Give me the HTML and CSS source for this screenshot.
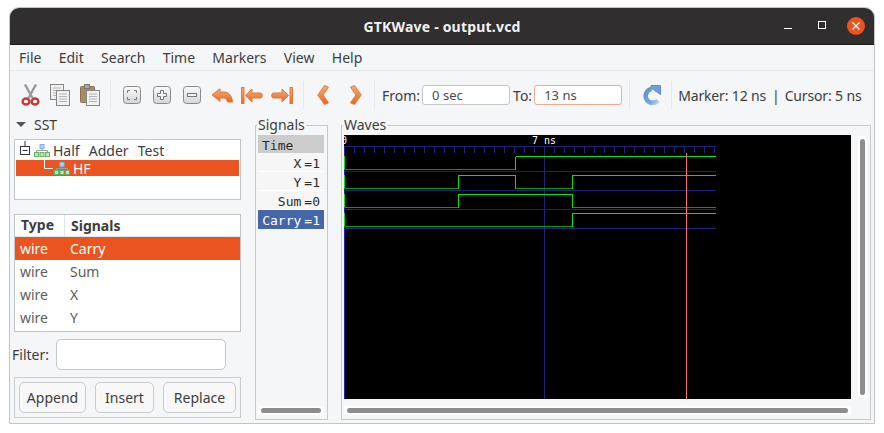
FILE: index.html
```html
<!DOCTYPE html>
<html lang="en">
<head>
  <meta charset="UTF-8" />
  <title>GTKWave - output.vcd</title>
  <link rel="stylesheet" href="styles.css">
</head>
<body>

  <svg class="defs">
    <defs>
      <linearGradient id="orange" x1="0" y1="0" x2="0" y2="1">
        <stop offset="0" stop-color="#f9ae74"/>
        <stop offset="1" stop-color="#e8661f"/>
      </linearGradient>
      <linearGradient id="key" x1="0" y1="0" x2="0" y2="1">
        <stop offset="0" stop-color="#fbfbfb"/>
        <stop offset="1" stop-color="#d4d4d4"/>
      </linearGradient>
      <linearGradient id="blue" x1="0" y1="0" x2="1" y2="1">
        <stop offset="0" stop-color="#5f93cf"/>
        <stop offset="0.7" stop-color="#78a8da"/>
        <stop offset="1" stop-color="#bcd4ee"/>
      </linearGradient>
      <symbol id="org" viewBox="0 0 16 13">
        <path d="M8 4V6.5M2.5 8V6.5H13.5V8" fill="none" stroke="#9a9a9a"/>
        <rect x="6" y="0.5" width="4" height="4" fill="#b5d0f5" stroke="#8aaee0"/>
        <rect x="0.5" y="8.5" width="4" height="4" fill="#bfe6b5" stroke="#62b562"/>
        <rect x="6" y="8.5" width="4" height="4" fill="#bfe6b5" stroke="#62b562"/>
        <rect x="11.5" y="8.5" width="4" height="4" fill="#bfe6b5" stroke="#62b562"/>
      </symbol>
      <symbol id="page" viewBox="0 0 14 16">
        <rect x="0.5" y="0.5" width="13" height="15" fill="#f1f1f1" stroke="#858585"/>
        <path d="M3 4H11M3 6.5H11M3 9H11M3 11.5H11" stroke="#b4b4b4"/>
      </symbol>
    </defs>
  </svg>

  <div class="window">

    <!-- TITLE BAR -->
    <header class="titlebar">
      <span></span>
      <span class="title">GTKWave - output.vcd</span>
      <div class="win-controls">
        <div class="win-btn"><svg width="10" height="10"><path d="M1 7.5H9" stroke="#fff"/></svg></div>
        <div class="win-btn"><svg width="10" height="10"><rect x="1.5" y="0.5" width="7" height="7" fill="none" stroke="#fff"/></svg></div>
        <div class="win-btn"><div class="close"><svg width="10" height="10"><path d="M1.5 1.5L8.5 8.5M8.5 1.5L1.5 8.5" stroke="#fff" stroke-width="1.3"/></svg></div></div>
      </div>
    </header>

    <!-- MENU -->
    <nav class="menubar">
      <span>File</span><span>Edit</span><span>Search</span><span>Time</span><span>Markers</span><span>View</span><span>Help</span>
    </nav>

    <!-- TOOLBAR -->
    <div class="toolbar">
      <div class="tool">
        <svg width="19" height="22" viewBox="0 0 19 22">
          <path d="M4 0.5L11.5 14M15 0.5L7.5 14" stroke="#9a9a9a" stroke-width="2.4" fill="none"/>
          <ellipse cx="5" cy="17.5" rx="3.4" ry="3" fill="none" stroke="#c23b3b" stroke-width="2.4"/>
          <ellipse cx="14" cy="17.5" rx="3.4" ry="3" fill="none" stroke="#c23b3b" stroke-width="2.4"/>
        </svg>
      </div>
      <div class="tool">
        <svg width="20" height="22" viewBox="0 0 20 22">
          <use href="#page" x="0" y="0" width="14" height="16"/>
          <use href="#page" x="6" y="6" width="14" height="16"/>
        </svg>
      </div>
      <div class="tool">
        <svg width="20" height="22" viewBox="0 0 20 22">
          <rect x="0.5" y="2.5" width="14" height="16" rx="1" fill="#b08a5c" stroke="#8d7050"/>
          <rect x="4.5" y="0.5" width="5" height="4" fill="#a8a8a8" stroke="#777"/>
          <use href="#page" x="6" y="6" width="14" height="16"/>
        </svg>
      </div>
      <div class="sep sep-a"></div>
      <div class="tool">
        <svg width="18" height="18" viewBox="0 0 18 18">
          <rect x="0.5" y="0.5" width="17" height="17" rx="3" fill="url(#key)" stroke="#8a8a8a"/>
          <path d="M7 4.5H4.5V7M11 4.5H13.5V7M7 13.5H4.5V11M11 13.5H13.5V11" fill="none" stroke="#777"/>
        </svg>
      </div>
      <div class="tool">
        <svg width="18" height="18" viewBox="0 0 18 18">
          <rect x="0.5" y="0.5" width="17" height="17" rx="3" fill="url(#key)" stroke="#8a8a8a"/>
          <path d="M7.5 4.5H10.5V7.5H13.5V10.5H10.5V13.5H7.5V10.5H4.5V7.5H7.5Z" fill="#f4f4f4" stroke="#777"/>
        </svg>
      </div>
      <div class="tool">
        <svg width="18" height="18" viewBox="0 0 18 18">
          <rect x="0.5" y="0.5" width="17" height="17" rx="3" fill="url(#key)" stroke="#8a8a8a"/>
          <rect x="4.5" y="7.5" width="9" height="3" fill="#f4f4f4" stroke="#777"/>
        </svg>
      </div>
      <div class="tool">
        <svg width="22" height="15" viewBox="0 0 22 15">
          <path d="M1 7L9 0.7V4H13C18 4 21 8 21.5 14H16.5C16 11 14 10 12 10H9V13.3Z" fill="url(#orange)" stroke="#e07a42" stroke-linejoin="round"/>
        </svg>
      </div>
      <div class="tool">
        <svg width="22" height="17" viewBox="0 0 22 17">
          <rect x="0.5" y="0.5" width="2.5" height="16" fill="url(#orange)" stroke="#e07a42"/>
          <path d="M4.5 8.5L11 2V6H20C21.7 6 21.7 11 20 11H11V15Z" fill="url(#orange)" stroke="#e07a42" stroke-linejoin="round"/>
        </svg>
      </div>
      <div class="tool">
        <svg width="22" height="17" viewBox="0 0 22 17">
          <rect x="19" y="0.5" width="2.5" height="16" fill="url(#orange)" stroke="#e07a42"/>
          <path d="M17.5 8.5L11 2V6H2C0.3 6 0.3 11 2 11H11V15Z" fill="url(#orange)" stroke="#e07a42" stroke-linejoin="round"/>
        </svg>
      </div>
      <div class="sep sep-b"></div>
      <div class="tool tool-wide">
        <svg width="12" height="20" viewBox="0 0 12 20">
          <path d="M7.5 0.5L0.8 10L7.5 19.5L11.5 17.8L6 10L11.5 2.2Z" fill="url(#orange)" stroke="#e07a42" stroke-linejoin="round"/>
        </svg>
      </div>
      <div class="tool tool-wide">
        <svg width="12" height="20" viewBox="0 0 12 20">
          <path d="M4.5 0.5L11.2 10L4.5 19.5L0.5 17.8L6 10L0.5 2.2Z" fill="url(#orange)" stroke="#e07a42" stroke-linejoin="round"/>
        </svg>
      </div>
      <div class="sep sep-c"></div>
      <label class="range-label">From:</label>
      <input class="range-input" type="text" value="0 sec">
      <label class="range-label to-label">To:</label>
      <input class="range-input to-input" type="text" value="13 ns">
      <div class="sep sep-d"></div>
      <div class="reload">
        <svg width="20" height="20" viewBox="0 0 20 20">
          <path d="M17 15.5A7 7 0 1 1 10.5 4" fill="none" stroke="url(#blue)" stroke-width="4.6"/>
          <path d="M10 0.5L19.5 0.5V9.5L16.5 7.5L10 3Z" fill="#6f9fd4" stroke="#5d8fc8"/>
        </svg>
      </div>
      <div class="sep sep-e"></div>
      <div class="status"><span>Marker: 12 ns</span><span class="status-bar">|</span><span>Cursor: 5 ns</span></div>
    </div>

    <!-- MAIN -->
    <div class="main">

      <div class="left">
        <div class="sst-head"><span class="arrow-down"></span>SST</div>

        <div class="tree">
          <div class="tree-row">
            <svg class="expander" width="10" height="19" viewBox="0 0 10 19">
              <path d="M5 0V5" stroke="#333"/>
              <rect x="0.5" y="5.5" width="9" height="8" fill="#fff" stroke="#333"/>
              <path d="M2.5 9.5H7.5" stroke="#333"/>
            </svg>
            <svg class="org" width="16" height="13"><use href="#org"/></svg>
            <span class="tree-name">Half Adder Test</span>
          </div>
          <div class="tree-row tree-selected">
            <svg class="elbow" width="9" height="16"><path d="M0.5 0V8.5H9" fill="none" stroke="#fff"/></svg>
            <svg class="org org-child" width="16" height="13"><use href="#org"/></svg>
            <span>HF</span>
          </div>
        </div>

        <div class="list">
          <div class="list-head"><span class="col-type">Type</span><span class="col-sig">Signals</span></div>
          <div class="list-row list-selected"><span class="col-type">wire</span><span>Carry</span></div>
          <div class="list-row"><span class="col-type">wire</span><span>Sum</span></div>
          <div class="list-row"><span class="col-type">wire</span><span>X</span></div>
          <div class="list-row"><span class="col-type">wire</span><span>Y</span></div>
        </div>

        <div class="filter">
          <label>Filter:</label>
          <input type="text">
        </div>

        <div class="actions">
          <button class="btn-append">Append</button>
          <button class="btn-insert">Insert</button>
          <button class="btn-replace">Replace</button>
        </div>
      </div>

      <fieldset class="frame signals">
        <legend>Signals</legend>
        <div class="sig-list">
          <div class="sig-time">Time</div>
          <div class="sig-row"><span>X</span><span>=1</span></div>
          <div class="sig-row"><span>Y</span><span>=1</span></div>
          <div class="sig-row"><span>Sum</span><span>=0</span></div>
          <div class="sig-row sig-selected"><span>Carry</span><span>=1</span></div>
        </div>
        <div class="hscroll"><div class="hthumb"></div></div>
      </fieldset>

      <fieldset class="frame waves">
        <legend>Waves</legend>
        <div class="wave-top">
          <svg class="canvas" width="507" height="264" viewBox="0 0 507 264" shape-rendering="crispEdges">
            <rect width="507" height="264" fill="#000"/>
            <text class="tick-label" x="-3" y="9">0</text>
            <text class="tick-label" x="188" y="9">7 ns</text>
            <!-- ruler -->
            <path d="M0 11.5H372" stroke="#20207e"/>
            <path d="M0.5 11V18M10.5 11V18M20.5 11V18M30.5 11V18M40.5 11V18M50.5 11V18M60.5 11V18M70.5 11V18M80.5 11V18M90.5 11V18M100.5 11V18M110.5 11V18M120.5 11V18M130.5 11V18M140.5 11V18M150.5 11V18M160.5 11V18M170.5 11V18M180.5 11V18M190.5 11V18M200.5 11V18M210.5 11V18M220.5 11V18M230.5 11V18M240.5 11V18M250.5 11V18M260.5 11V18M270.5 11V18M280.5 11V18M290.5 11V18M300.5 11V18M310.5 11V18M320.5 11V18M330.5 11V18M340.5 11V18M350.5 11V18M360.5 11V18M370.5 11V18" stroke="#20207e"/>
            <!-- row separators -->
            <path d="M0 36.5H372M0 55.5H372M0 74.5H372M0 93.5H372" stroke="#20207e"/>
            <path d="M0.5 18V264" stroke="#2424b0"/>
            <path d="M200.5 12V264" stroke="#20207e"/>
            <!-- low levels -->
            <path d="M0 34.5H171M0 53.5H114M171 53.5H228M0 72.5H114M228 72.5H372M0 91.5H228" stroke="#00a000"/>
            <!-- high levels -->
            <path d="M171.5 21.5H372M171.5 21.5V34.5M0.5 21V34M0.5 40V53M114.5 53.5V40.5H171.5V53.5M228.5 53.5V40.5H372M0.5 59V72M114.5 72.5V59.5H228.5V72.5M0.5 78V91M228.5 91.5V78.5H372" fill="none" stroke="#00e800"/>
            <!-- marker -->
            <path d="M342.5 18V264" stroke="#ff7070"/>
          </svg>
          <div class="vscroll"><div class="vthumb"></div></div>
        </div>
        <div class="hscroll"><div class="hthumb"></div></div>
      </fieldset>

    </div>
  </div>

</body>
</html>
```

FILE: styles.css
```css
* {
  box-sizing: border-box;
}

body {
  margin: 0;
  background-color: #fff;
  font-family: "Noto Sans", sans-serif;
  font-size: 14px;
  color: #3d3d3d;
}

.defs {
  display: block;
  width: 0;
  height: 0;
}

.window {
  margin: 7px 0 0 9px;
  width: 866px;
  height: 417px;
  display: flex;
  flex-direction: column;
  background-color: #f5f6f7;
  border: 1px solid #c2c4c6;
  border-radius: 10px 10px 0 0;
  overflow: hidden;
}

/* ===== TITLE BAR ===== */
.titlebar {
  height: 37px;
  flex: none;
  display: grid;
  grid-template-columns: 1fr auto 1fr;
  align-items: center;
  background-color: #302e2e;
  border-bottom: 1px solid #1d1c1c;
  color: #f2f2f2;
}

.title {
  font-weight: 700;
  font-size: 14px;
  letter-spacing: 0.2px;
}

.win-controls {
  display: flex;
  justify-content: flex-end;
  padding-right: 1px;
}

.win-btn {
  width: 34px;
  height: 20px;
  display: flex;
  align-items: center;
  justify-content: center;
}

.close {
  width: 18px;
  height: 18px;
  border-radius: 50%;
  background-color: #e95420;
  display: flex;
  align-items: center;
  justify-content: center;
}

/* ===== MENU ===== */
.menubar {
  height: 26px;
  flex: none;
  display: flex;
  align-items: center;
  padding-left: 9px;
  gap: 17.3px;
  border-bottom: 1px solid #e7e9eb;
}

/* ===== TOOLBAR ===== */
.toolbar {
  height: 44px;
  flex: none;
  display: flex;
  align-items: center;
  padding: 4px 0 0 5px;
}

.tool {
  width: 30px;
  display: flex;
  justify-content: center;
}

.tool-wide {
  width: 33px;
}

.sep {
  width: 1px;
  height: 28px;
  background-color: #e6e8ea;
}

.sep-a { margin: 0 6px 0 5px; }
.sep-b { margin: 0 2px 0 6px; }
.sep-c { margin: 0 7px 0 2px; }
.sep-d { margin: 0 11px 0 7px; }
.sep-e { margin: 0 6px 0 10px; }

.range-label {
  margin-right: 2px;
}

.to-label {
  margin-left: 3px;
}

.range-input {
  width: 88px;
  height: 20px;
  padding: 0 9px;
  font: inherit;
  font-size: 13px;
  color: #4a4a4a;
  background-color: #fff;
  border: 1px solid #c4c6c8;
  border-radius: 3px;
}

.to-input {
  border-color: #f2a88c;
}

.reload {
  display: flex;
}

.status {
  display: flex;
  white-space: nowrap;
  letter-spacing: -0.15px;
}

.status-bar {
  margin: 0 5px 0 6px;
}

/* ===== MAIN AREA ===== */
.main {
  flex: 1;
  display: flex;
  min-height: 0;
  padding-left: 4px;
}

.left {
  width: 227px;
  flex: none;
  display: flex;
  flex-direction: column;
}

.sst-head {
  height: 24px;
  padding: 0 0 6px 2px;
  display: flex;
  align-items: center;
}

.arrow-down {
  width: 0;
  height: 0;
  margin-right: 8px;
  border-left: 5px solid transparent;
  border-right: 5px solid transparent;
  border-top: 5px solid #555;
}

.tree {
  height: 61px;
  padding: 1px;
  background-color: #fff;
  border: 1px solid #c2c5c9;
}

.tree-row {
  height: 19px;
  display: flex;
  align-items: center;
  padding-left: 4px;
}

.expander {
  flex: none;
}

.org {
  margin-left: 4px;
  flex: none;
}

.tree-name {
  margin-left: 3px;
  word-spacing: 5.5px;
}

.tree-selected {
  height: 16px;
  padding-left: 28px;
  background-color: #e95420;
  color: #fff;
}

.org-child {
  margin-left: 1px;
  margin-right: 3px;
}

.list {
  height: 118px;
  margin-top: 14px;
  background-color: #fff;
  border: 1px solid #c2c5c9;
}

.list-head {
  height: 22px;
  display: flex;
  align-items: center;
  font-weight: 700;
  border-bottom: 1px solid #e3e5e7;
}

.col-type {
  width: 55px;
  padding-left: 5px;
  flex: none;
}

.list-head .col-type {
  width: 50px;
  height: 21px;
  padding-left: 6px;
  border-right: 1px solid #e3e5e7;
}

.col-sig {
  padding-left: 6px;
}

.list-row {
  height: 23px;
  display: flex;
  align-items: center;
  color: #5e5e5e;
}

.list-selected {
  background-color: #e95420;
  color: #fff;
}

.filter {
  margin: 7px 0 0 -2px;
  display: flex;
  align-items: center;
  gap: 7px;
}

.filter input {
  width: 170px;
  height: 31px;
  background-color: #fff;
  border: 1px solid #c4c6c8;
  border-radius: 5px;
}

.actions {
  margin-top: 7px;
  height: 41px;
  display: flex;
  gap: 9px;
  padding: 4px;
  border: 1px solid #c9ccd0;
}

.actions button {
  height: 31px;
  padding: 0;
  font: inherit;
  color: #3d3d3d;
  background-color: #f8f8f9;
  border: 1px solid #c9cbce;
  border-radius: 5px;
}

.btn-append { width: 67px; }
.btn-insert { width: 59px; }
.btn-replace { width: 73px; }

/* ===== FRAMES ===== */
.frame {
  margin: 1px 0 0;
  padding: 1px 2px 0;
  min-width: 0;
  height: 304px;
  border: 1px solid #c6c9cc;
  display: flex;
  flex-direction: column;
}

.frame legend {
  padding: 0 1px;
  margin-left: -1px;
  line-height: 18px;
  font-size: 14px;
}

.signals {
  width: 73px;
  margin-left: 14px;
  padding-right: 3px;
  flex: none;
}

.waves {
  width: 530px;
  margin-left: 13px;
  flex: none;
}

.sig-list {
  flex: 1;
  font-family: "DejaVu Sans Mono", monospace;
  font-size: 13px;
  color: #2c2c2c;
}

.sig-time {
  height: 18px;
  line-height: 22px;
  padding-left: 4px;
  background-color: #cccccc;
}

.sig-row {
  height: 19px;
  display: flex;
  justify-content: flex-end;
  gap: 3px;
  padding-right: 4px;
  line-height: 22px;
  background-color: #f6f6f6;
  border-bottom: 1px solid #fff;
}

.sig-selected {
  background-color: #4566a8;
  color: #fff;
  border-bottom: none;
}

.wave-top {
  display: flex;
  align-items: flex-start;
}

.canvas {
  display: block;
  flex: none;
}

.tick-label {
  font-family: "DejaVu Sans Mono", monospace;
  font-size: 10px;
  fill: #fff;
}

.vscroll {
  width: 9px;
  height: 262px;
  margin: 1px 0 0 7px;
  padding: 3px 2px 3px;
  background-color: #fff;
}

.vthumb {
  height: 100%;
  background-color: #8d8d8d;
  border-radius: 3px;
}

.hscroll {
  width: 100%;
  height: 9px;
  margin: 7px 0 4px;
  padding: 2px 3px;
  background-color: #fff;
}

.waves .hscroll {
  width: 507px;
}

.hthumb {
  height: 5px;
  background-color: #8d8d8d;
  border-radius: 3px;
}
```
